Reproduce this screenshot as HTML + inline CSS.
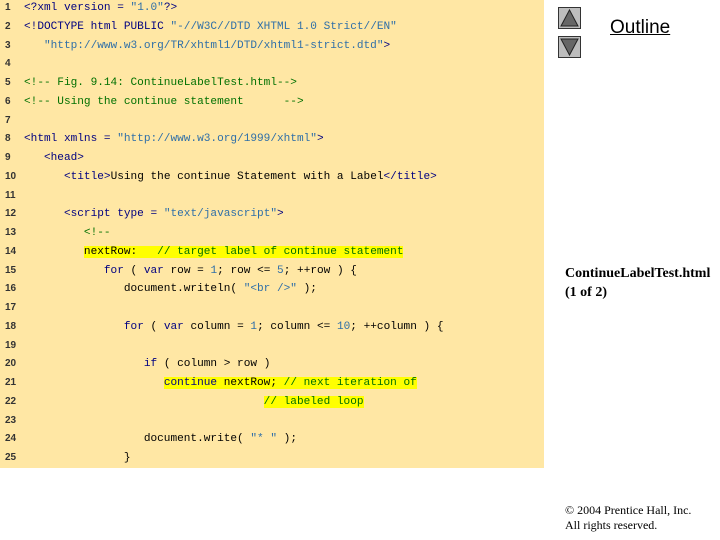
<!DOCTYPE html>
<html><head><style>
body{margin:0;width:720px;height:540px;background:#fff;position:relative;overflow:hidden}
#code{position:absolute;left:0;top:0;width:544px;height:468px;background:#FFE7A4;overflow:hidden}
#in{position:absolute;left:0;top:4px;width:544px}
.l{position:absolute;left:0;height:19px;line-height:19px;white-space:pre;font:11.1px "Liberation Mono",monospace;color:#000}
.n{position:absolute;left:5px;font:bold 10px "Liberation Sans",sans-serif;color:#333}
.c{position:absolute;left:24px}
.k{color:#000080}.s{color:#2f6fa8}.g{color:#007000}.h{background:#ffff00}
.out{position:absolute;left:610px;top:17px;font:19px "Liberation Sans",sans-serif;text-decoration:underline;color:#000}
.btn{position:absolute;left:558px;width:23px;height:22px;background:#bdbdbd;border:1px solid #333;box-sizing:border-box}
.t{font:bold 14px "Liberation Serif",serif;position:absolute;left:565px;line-height:19px}
.f{font:12px "Liberation Serif",serif;position:absolute;left:565px;line-height:15px}
</style></head><body>
<div id="code"><div id="in">
<div class="l" style="top:-2px"><span class="n">1</span><span class="c"><span class="k">&lt;?xml version = </span><span class="s">"1.0"</span><span class="k">?&gt;</span></span></div>
<div class="l" style="top:16.75px"><span class="n">2</span><span class="c"><span class="k">&lt;!DOCTYPE html PUBLIC </span><span class="s">"-//W3C//DTD XHTML 1.0 Strict//EN"</span></span></div>
<div class="l" style="top:35.5px"><span class="n">3</span><span class="c"><span class="s">   "http://www.w3.org/TR/xhtml1/DTD/xhtml1-strict.dtd"</span><span class="k">&gt;</span></span></div>
<div class="l" style="top:54.25px"><span class="n">4</span></div>
<div class="l" style="top:73px"><span class="n">5</span><span class="c g">&lt;!-- Fig. 9.14: ContinueLabelTest.html--&gt;</span></div>
<div class="l" style="top:91.75px"><span class="n">6</span><span class="c g">&lt;!-- Using the continue statement      --&gt;</span></div>
<div class="l" style="top:110.5px"><span class="n">7</span></div>
<div class="l" style="top:129.25px"><span class="n">8</span><span class="c"><span class="k">&lt;html xmlns = </span><span class="s">"http://www.w3.org/1999/xhtml"</span><span class="k">&gt;</span></span></div>
<div class="l" style="top:148px"><span class="n">9</span><span class="c k">   &lt;head&gt;</span></div>
<div class="l" style="top:166.75px"><span class="n">10</span><span class="c">      <span class="k">&lt;title&gt;</span>Using the continue Statement with a Label<span class="k">&lt;/title&gt;</span></span></div>
<div class="l" style="top:185.5px"><span class="n">11</span></div>
<div class="l" style="top:204.25px"><span class="n">12</span><span class="c">      <span class="k">&lt;script type = </span><span class="s">"text/javascript"</span><span class="k">&gt;</span></span></div>
<div class="l" style="top:223px"><span class="n">13</span><span class="c g">         &lt;!--</span></div>
<div class="l" style="top:241.75px"><span class="n">14</span><span class="c">         <span class="h">nextRow:   <span class="g">// target label of continue statement</span></span></span></div>
<div class="l" style="top:260.5px"><span class="n">15</span><span class="c">            <span class="k">for</span> ( <span class="k">var</span> row = <span class="s">1</span>; row &lt;= <span class="s">5</span>; ++row ) {</span></div>
<div class="l" style="top:279.25px"><span class="n">16</span><span class="c">               document.writeln( <span class="s">"&lt;br /&gt;"</span> );</span></div>
<div class="l" style="top:298px"><span class="n">17</span></div>
<div class="l" style="top:316.75px"><span class="n">18</span><span class="c">               <span class="k">for</span> ( <span class="k">var</span> column = <span class="s">1</span>; column &lt;= <span class="s">10</span>; ++column ) {</span></div>
<div class="l" style="top:335.5px"><span class="n">19</span></div>
<div class="l" style="top:354.25px"><span class="n">20</span><span class="c">                  <span class="k">if</span> ( column &gt; row )</span></div>
<div class="l" style="top:373px"><span class="n">21</span><span class="c">                     <span class="h"><span class="k">continue</span> nextRow; <span class="g">// next iteration of</span></span></span></div>
<div class="l" style="top:391.75px"><span class="n">22</span><span class="c">                                    <span class="h g">// labeled loop</span></span></div>
<div class="l" style="top:410.5px"><span class="n">23</span></div>
<div class="l" style="top:429.25px"><span class="n">24</span><span class="c">                  document.write( <span class="s">"* "</span> );</span></div>
<div class="l" style="top:448px"><span class="n">25</span><span class="c">               }</span></div>
</div></div>
<div class="btn" style="top:7px"><svg width="21" height="20" style="position:absolute;left:0;top:0"><polygon points="10.5,2 19,18 2,18" fill="#666" stroke="#222"/></svg></div>
<div class="btn" style="top:36px"><svg width="21" height="20" style="position:absolute;left:0;top:0"><polygon points="2,2 19,2 10.5,18" fill="#666" stroke="#222"/></svg></div>
<div class="out">Outline</div>
<div class="t" style="top:264px">ContinueLabelTest.html<br>(1 of 2)</div>
<div class="f" style="top:503px">© 2004 Prentice Hall, Inc.<br>All rights reserved.</div>
</body></html>
